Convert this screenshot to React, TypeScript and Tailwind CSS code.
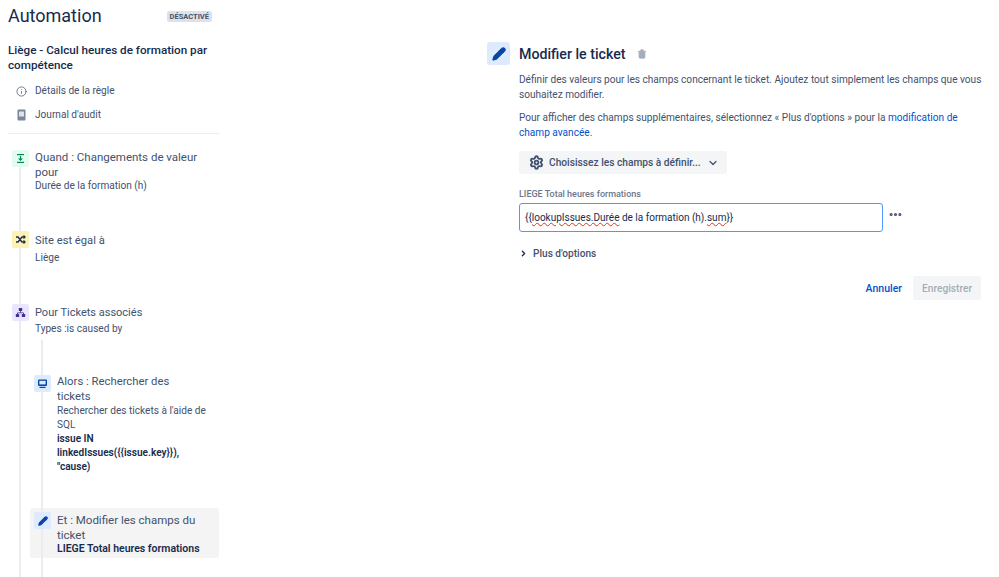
import { ChevronDown, ChevronRight, Info, MoreHorizontal, Pencil, Settings, Trash2 } from 'lucide-react'
import type { ReactNode } from 'react'

function StepIcon({ className, children }: { className: string; children: ReactNode }) {
    return <div className={`flex h-[17px] w-[17px] shrink-0 items-center justify-center rounded-[2px] ${className}`}>{children}</div>
}

function Step({ icon, title, titleClass, children, className }: { icon: ReactNode; title: string; titleClass: string; children: ReactNode; className: string }) {
    return (
        <div className={`relative flex items-start gap-[6px] ${className}`}>
            {icon}
            <div className="min-w-0 flex-1 text-[10.1px] leading-[14px] text-[#42526e]">
                <div className={`leading-[14.5px] ${titleClass}`}>{title}</div>
                {children}
            </div>
        </div>
    )
}

const squiggle = 'underline decoration-wavy decoration-[#de350b] decoration-1'

export default function App() {
    return (
        <div className="flex h-[577px] w-[999px] overflow-hidden bg-white font-['Roboto','Noto_Sans',sans-serif] text-[#42526e]">
            {/* Rule sidebar */}
            <aside className="ml-2 flex w-[211px] shrink-0 flex-col">
                <div className="flex items-center justify-between pr-[7px] pt-[4px]">
                    <h1 className="text-[18px] leading-[24px] text-[#172b4d]">Automation</h1>
                    <span className="rounded-[2px] bg-[#dfe1e6] px-[3px] text-[7.5px] font-bold leading-[11px] text-[#42526e]">DÉSACTIVÉ</span>
                </div>
                <h2 className="mt-[15px] text-[11.7px] font-medium leading-[15px] text-[#172b4d]">Liège - Calcul heures de formation par compétence</h2>
                <div className="mt-[11px] flex flex-col gap-[10px] border-b border-[#ebecf0] pb-[11px] text-[10.1px] leading-[14px]">
                    <div className="flex items-center gap-[8px] pl-[8px]">
                        <Info size={11} strokeWidth={1.6} />
                        <span>Détails de la règle</span>
                    </div>
                    <div className="flex items-center gap-[8px] pl-[8px]">
                        <svg width="11" height="12" viewBox="0 0 11 12">
                            <rect x="1.5" y="0.5" width="8" height="11" rx="1" fill="#7a869a" />
                            <rect x="3" y="2.5" width="5" height="5" fill="#dfe1e6" />
                        </svg>
                        <span>Journal d'audit</span>
                    </div>
                </div>

                {/* Steps */}
                <div className="relative flex-1 pl-[4px]">
                    <div className="absolute bottom-0 left-[11px] top-[32px] w-[2px] bg-[#ebecf0]" />
                    <div className="absolute bottom-0 left-[33px] top-[206px] w-[2px] bg-[#ebecf0]" />

                    <Step
                        className="mt-[16px]"
                        title="Quand : Changements de valeur pour"
                        titleClass="text-[11.5px]"
                        icon={
                            <StepIcon className="bg-[#e3fcef] text-[#00875a]">
                                <svg width="11" height="11" viewBox="0 0 11 11" fill="currentColor">
                                    <rect x="2" y="1" width="7" height="1.2" />
                                    <rect x="2" y="8.8" width="7" height="1.2" />
                                    <path d="M4.9 3h1.2v2.5H8L5.5 8 3 5.5h1.9z" />
                                </svg>
                            </StepIcon>
                        }
                    >
                        Durée de la formation (h)
                    </Step>

                    <Step
                        className="mt-[38px]"
                        title="Site est égal à"
                        titleClass="pt-[3px] text-[11.2px]"
                        icon={
                            <StepIcon className="bg-[#fff0b3] text-[#172b4d]">
                                <svg width="11" height="11" viewBox="0 0 11 11" fill="none" stroke="currentColor" strokeWidth="1.3">
                                    <path d="M1 3h2l4 5h2.5M1 8h2l4-5h2.5" />
                                    <path d="M8.5 1.5 10 3 8.5 4.5M8.5 6.5 10 8 8.5 9.5" />
                                </svg>
                            </StepIcon>
                        }
                    >
                        <div className="mt-[2px]">Liège</div>
                    </Step>

                    <Step
                        className="mt-[39px]"
                        title="Pour Tickets associés"
                        titleClass="pt-[2px] text-[11px]"
                        icon={
                            <StepIcon className="bg-[#eae6ff] text-[#403294]">
                                <svg width="11" height="11" viewBox="0 0 11 11" fill="currentColor">
                                    <rect x="3.8" y="1" width="3.4" height="3" rx="0.5" />
                                    <rect x="0.8" y="7" width="3.4" height="3" rx="0.5" />
                                    <rect x="6.8" y="7" width="3.4" height="3" rx="0.5" />
                                    <path d="M5.1 4h.8v1.5h2.9V7H8V6.3H3V7h-.8V5.5h2.9z" />
                                </svg>
                            </StepIcon>
                        }
                    >
                        <div className="mt-[2px]">Types :is caused by</div>
                    </Step>

                    <div className="pl-[22px]">
                        <Step
                            className="mt-[39px] pr-[10px]"
                            title="Alors : Rechercher des tickets"
                            titleClass="w-[125px] text-[11.3px]"
                            icon={
                                <StepIcon className="bg-[#deebff] text-[#0747a6]">
                                    <svg width="11" height="11" viewBox="0 0 11 11">
                                        <rect x="1" y="1.5" width="9" height="6.5" rx="1" fill="currentColor" />
                                        <rect x="2.4" y="2.8" width="6.2" height="3.6" fill="#deebff" />
                                        <rect x="2.5" y="8.8" width="6" height="1.2" fill="currentColor" />
                                    </svg>
                                </StepIcon>
                            }
                        >
                            Rechercher des tickets à l'aide de SQL
                            <div className="w-[140px] font-semibold text-[#172b4d]">{'issue IN linkedIssues({{issue.key}}), "cause)'}</div>
                        </Step>
                    </div>

                    <div className="pl-[18px]">
                        <div className="mt-[34px] rounded-[3px] bg-[#f4f4f4] px-[4px] pb-[2px] pt-[4px]">
                            <Step
                                className="pr-[15px]"
                                title="Et : Modifier les champs du ticket"
                                titleClass="pt-[1px] text-[11.5px]"
                                icon={
                                    <StepIcon className="bg-[#deebff] text-[#0747a6]">
                                        <Pencil size={10} strokeWidth={3} fill="currentColor" />
                                    </StepIcon>
                                }
                            >
                                <div className="whitespace-nowrap text-[10.5px] font-semibold text-[#172b4d]">LIEGE Total heures formations</div>
                            </Step>
                        </div>
                    </div>
                </div>
            </aside>

            {/* Step editor */}
            <main className="ml-[268px] flex w-[494px] shrink-0 flex-col pt-[42px]">
                <div className="flex items-center gap-[9px]">
                    <div className="flex h-[23px] w-[23px] items-center justify-center rounded-[3px] bg-[#deebff] text-[#0747a6]">
                        <Pencil size={14} strokeWidth={2.8} fill="currentColor" />
                    </div>
                    <h2 className="text-[14.2px] font-medium leading-[20px] text-[#172b4d]">Modifier le ticket</h2>
                    <Trash2 size={10} className="ml-[2px] text-[#a5adba]" fill="currentColor" />
                </div>
                <div className="ml-[32px] text-[10.1px] leading-[15px]">
                    <p className="-mr-[4px] mt-[7px]">Définir des valeurs pour les champs concernant le ticket. Ajoutez tout simplement les champs que vous souhaitez modifier.</p>
                    <p className="-mr-[4px] mt-[8px]">
                        Pour afficher des champs supplémentaires, sélectionnez « Plus d'options » pour la <span className="text-[#0052cc]">modification de</span> <span className="text-[#0052cc]">champ avancée</span>.
                    </p>
                    <button className="mt-[11px] flex h-[23px] w-[208px] items-center gap-[5px] whitespace-nowrap rounded-[3px] bg-[#f4f5f7] pl-[10px] text-[10.2px] font-medium text-[#42526e]">
                        <Settings size={15} strokeWidth={3} />
                        <span>Choisissez les champs à définir...</span>
                        <ChevronDown size={12} strokeWidth={2.5} className="ml-[1px]" />
                    </button>
                    <label className="mt-[14px] block text-[9px] font-medium leading-[12px] text-[#6b778c]">LIEGE Total heures formations</label>
                    <div className="mt-[3px] flex items-center gap-[5px]">
                        <div className="flex h-[29px] w-[364px] items-center rounded-[3px] border border-[#4c9aff] pl-[5px] text-[10px] text-[#172b4d]">
                            <span className="whitespace-pre">
                                {'{{'}
                                <span className={squiggle}>lookupIssues.Durée</span>
                                {' de la formation (h).'}
                                <span className={squiggle}>sum</span>
                                {'}}'}
                            </span>
                        </div>
                        <MoreHorizontal size={15} strokeWidth={3} className="-mt-[6px] text-[#42526e]" />
                    </div>
                    <div className="mt-[14px] flex items-center gap-[5px] font-medium">
                        <ChevronRight size={9} strokeWidth={3.5} className="text-[#172b4d]" />
                        <span>Plus d'options</span>
                    </div>
                    <div className="mt-[15px] flex items-center justify-end gap-[11px]">
                        <span className="text-[10.5px] font-medium text-[#0052cc]">Annuler</span>
                        <button className="flex h-[24px] items-center rounded-[3px] bg-[#f4f5f7] px-[9px] text-[10.2px] font-medium text-[#a5adba]">Enregistrer</button>
                    </div>
                </div>
            </main>
        </div>
    )
}
